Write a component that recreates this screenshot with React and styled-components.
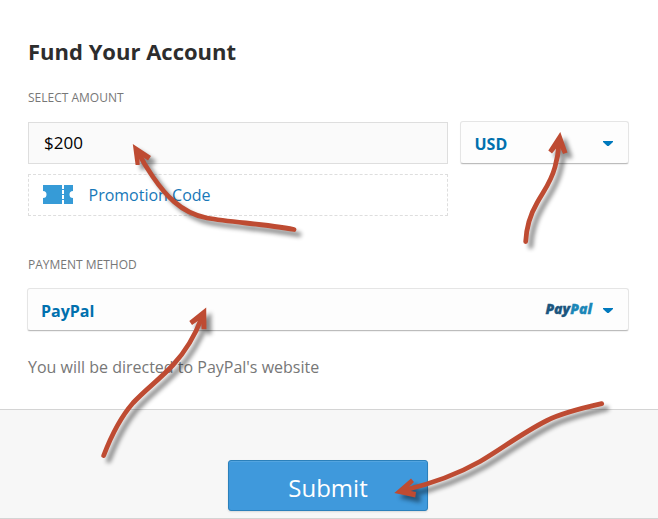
import React from "react";
import styled, { createGlobalStyle } from "styled-components";

const ARROWS = [
  {
    shaft:
      "M294 229.5 C266 224 232 222.5 207 218 C180 213 164 193 153 177 C146 167 142 160 138 152",
    head: "132.8,144 151,156 148,160.5 139.5,155 139.7,165 135.6,165",
  },
  {
    shaft:
      "M525.7 241.5 C526.5 226 530 215 537 203 C545 189 551 182 555 167 C557.5 158 558.5 152 559 143",
    head: "560.3,132 567.5,152.5 563,154 559,145 552,153.5 548.3,150.5",
  },
  {
    shaft:
      "M103.7 455.5 C110 439 119 419 133 403 C145 390 160 379 173 365 C186 351 196 333 202 317",
    head: "206.2,307.5 206.5,329.3 201.6,329.3 201,319 192,325 189.3,321",
  },
  {
    shaft:
      "M601.7 403.7 C578 409 561 413.5 547 420.5 C522 433 500 450 480 461.5 C457 474.5 436 482.5 405 490",
    head: "394.3,493 411,478.5 414,482 406,490 416,492 415.3,497.5",
  },
];

export default function App() {
  return (
    <Page>
      <GlobalStyle />
      <Form>
        <Title>Fund Your Account</Title>
        <Label>SELECT AMOUNT</Label>
        <AmountRow>
          <AmountInput type="text" defaultValue="$200" aria-label="Amount" />
          <Select type="button">
            <span>USD</span>
            <Caret />
          </Select>
        </AmountRow>
        <PromoLink href="#">
          <TicketIcon />
          Promotion Code
        </PromoLink>
        <MethodLabel>PAYMENT METHOD</MethodLabel>
        <MethodSelect type="button">
          <span>PayPal</span>
          <SelectEnd>
            <PayPalLogo>
              Pay<span>Pal</span>
            </PayPalLogo>
            <Caret />
          </SelectEnd>
        </MethodSelect>
        <Note>You will be directed to PayPal's website</Note>
      </Form>
      <Footer>
        <SubmitButton type="submit">Submit</SubmitButton>
      </Footer>
      <Arrows />
    </Page>
  );
}

function Caret() {
  return (
    <svg width="10" height="6" viewBox="0 0 10 6" fill="#0079bd">
      <path d="M0 0h10v1L5.7 5H4.3L0 1Z" />
    </svg>
  );
}

function TicketIcon() {
  return (
    <svg width="30" height="19" viewBox="0 0 30 19">
      <path
        fill="#369bd7"
        d="M0 0h19v19H0v-6a3.5 3.5 0 0 0 0-7Z M21 0h9v6a3.5 3.5 0 0 0 0 7V19h-9Z"
      />
      <path stroke="#369bd7" d="M19 4.5h2M19 9.5h2M19 14.5h2" />
    </svg>
  );
}

function Arrows() {
  return (
    <Overlay width="658" height="519" viewBox="0 0 658 519">
      {ARROWS.map(({ shaft, head }) => (
        <g key={head}>
          <path d={shaft} />
          <polygon points={head} />
        </g>
      ))}
    </Overlay>
  );
}

const GlobalStyle = createGlobalStyle`
  * {
    box-sizing: border-box;
  }
  body {
    margin: 0;
    background: #fff;
    font-family: "Open Sans", "Noto Sans", sans-serif;
  }
  button, input {
    font-family: inherit;
  }
`;

const Page = styled.div`
  position: relative;
  width: 658px;
  height: 519px;
  overflow: hidden;
`;

const Form = styled.div`
  height: 409px;
  padding: 36px 29px 0 28px;
`;

const Title = styled.h1`
  margin: 0 0 24px;
  color: #2d2d2d;
  font-size: 22px;
  font-weight: 700;
  line-height: 30px;
`;

const Label = styled.div`
  height: 16px;
  margin-bottom: 15px;
  color: #777;
  font-size: 12px;
  line-height: 16px;
`;

const MethodLabel = styled(Label)`
  margin-top: 41px;
`;

const AmountRow = styled.div`
  display: grid;
  grid-template-columns: 420px 169px;
  column-gap: 12px;
  height: 43px;
`;

const AmountInput = styled.input`
  height: 42px;
  margin-top: 1px;
  padding: 0 15px 2px;
  border: 1px solid #dedede;
  border-radius: 0;
  background: #fafafa;
  color: #000;
  font-size: 17px;
`;

const Select = styled.button`
  display: flex;
  align-items: center;
  justify-content: space-between;
  width: 100%;
  height: 43px;
  padding: 2px 15px 0 13.5px;
  border: 1px solid #e5e5e5;
  border-bottom-color: #bcbcbc;
  border-radius: 3px;
  background: #fdfdfd;
  box-shadow: 0 1px 1px rgba(0, 0, 0, 0.06);
  color: #0070ae;
  font-size: 16px;
  font-weight: 700;
`;

const MethodSelect = styled(Select)`
  width: 602px;
  margin-left: -1px;
  padding-left: 13px;
`;

const SelectEnd = styled.div`
  display: flex;
  align-items: center;
  gap: 11px;
`;

const PayPalLogo = styled.span`
  margin-top: -4px;
  color: #1c567f;
  font-size: 14px;
  font-style: italic;
  font-weight: 800;
  -webkit-text-stroke: 0.3px;

  span {
    color: #1b87b8;
  }
`;

const PromoLink = styled.a`
  display: flex;
  align-items: center;
  gap: 15.5px;
  width: 420px;
  height: 42px;
  margin-top: 10px;
  padding-left: 14px;
  border: 1px dashed #dedede;
  color: #1778b8;
  font-size: 16px;
  text-decoration: none;

  svg {
    margin-bottom: 1px;
  }
`;

const Note = styled.p`
  margin: 25px 0 0;
  color: #777;
  font-size: 16px;
  line-height: 22px;
`;

const Footer = styled.div`
  display: flex;
  height: 110px;
  padding: 50px 0 0 228px;
  border-top: 1px solid #d4d4d4;
  border-bottom: 1px solid #d4d4d4;
  background: #f7f7f7;
`;

const SubmitButton = styled.button`
  width: 200px;
  height: 51px;
  padding: 4px 0 0;
  border: 1px solid #2b80bb;
  border-radius: 3px;
  background: #3f99dc;
  box-shadow: inset 0 1px 0 #54a5e0, 0 1px 2px rgba(0, 0, 0, 0.12);
  color: #fff;
  font-size: 24px;
`;

const Overlay = styled.svg`
  position: absolute;
  top: 0;
  left: 0;
  pointer-events: none;

  g {
    filter: drop-shadow(5px 5px 2px rgba(0, 0, 0, 0.45));
  }
  path {
    fill: none;
    stroke: #be4b32;
    stroke-width: 4.8;
    stroke-linecap: round;
  }
  polygon {
    fill: #be4b32;
  }
`;
